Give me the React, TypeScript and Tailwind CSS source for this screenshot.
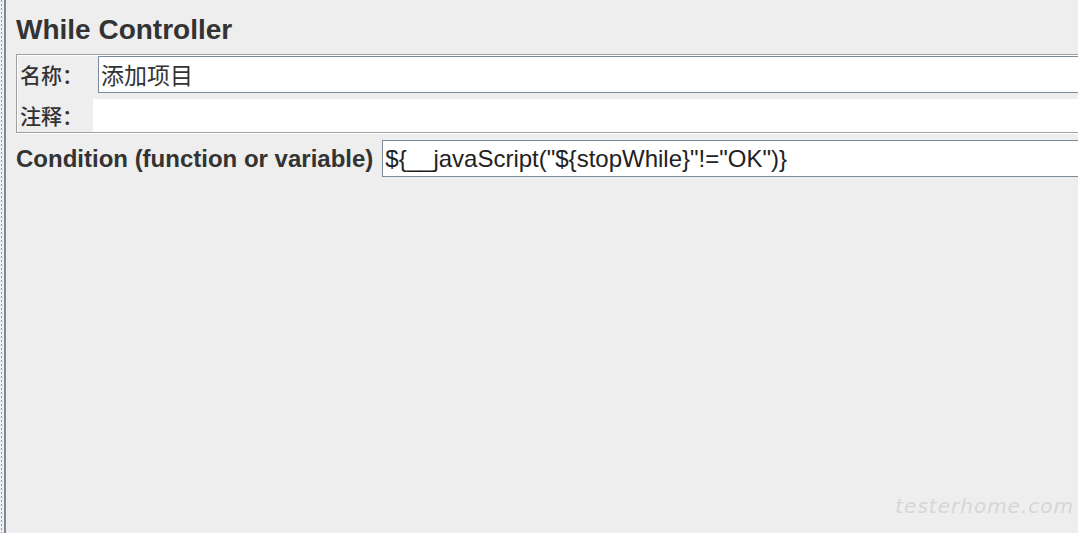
export default function App() {
  const cjk = "font-['Noto_Sans_CJK_SC',sans-serif]";
  const latin = "font-['Liberation_Sans',Arial,sans-serif]";

  return (
    <div className="relative flex h-[533px] w-[1078px] overflow-hidden bg-[#eeeeee] text-[#333333]">
      {/* left splitter edge */}
      <div className="ml-px h-full w-px shrink-0 bg-[linear-gradient(to_bottom,#8f99a8_50%,transparent_50%)] [background-size:1px_4px]" />
      <div className="ml-[2px] h-full w-[2px] shrink-0 bg-[#7b899d]" />

      <div className="flex min-w-0 flex-1 flex-col pl-[10px]">
        <h1 className={`${latin} pt-[14px] text-[28px] font-bold leading-[32px]`}>While Controller</h1>

        {/* name / comment panel */}
        <div className="mt-[8px] w-[1100px] border border-[#a0a0a0] pt-px shadow-[inset_1px_1px_0_#ffffff,1px_1px_0_#ffffff]">
          <div className="flex h-[37px] items-center">
            <span className={`${cjk} w-[81px] shrink-0 pl-[3px] text-[21px] font-medium`}>名称：</span>
            <div className="flex h-full flex-1 items-center border border-[#7a8a9f] bg-white pl-[2px]">
              <span className={`${cjk} text-[23px] leading-none`}>添加项目</span>
            </div>
          </div>
          <div className="mt-[6px] flex h-[33px] items-center">
            <span className={`${cjk} w-[76px] shrink-0 pl-[3px] text-[21px] font-medium`}>注释：</span>
            <div className="h-full flex-1 bg-white" />
          </div>
        </div>

        {/* condition row */}
        <div className="mt-[7px] flex h-[37px] w-[1100px] items-center">
          <span className={`${latin} shrink-0 text-[24px] font-bold`}>Condition (function or variable)</span>
          <div className="ml-[9px] flex h-full flex-1 items-center border border-[#7a8a9f] bg-white pl-[2px]">
            <span className={`${latin} text-[24px] leading-none text-[#222222]`}>
              {'${__javaScript("${stopWhile}"!="OK")}'}
            </span>
          </div>
        </div>
      </div>

      {/* watermark */}
      <span className="absolute bottom-[12px] right-[4px] font-['DejaVu_Sans',sans-serif] text-[20px] font-extralight italic tracking-[1px] text-[#d6d6d6]">
        testerhome.com
      </span>
    </div>
  );
}
